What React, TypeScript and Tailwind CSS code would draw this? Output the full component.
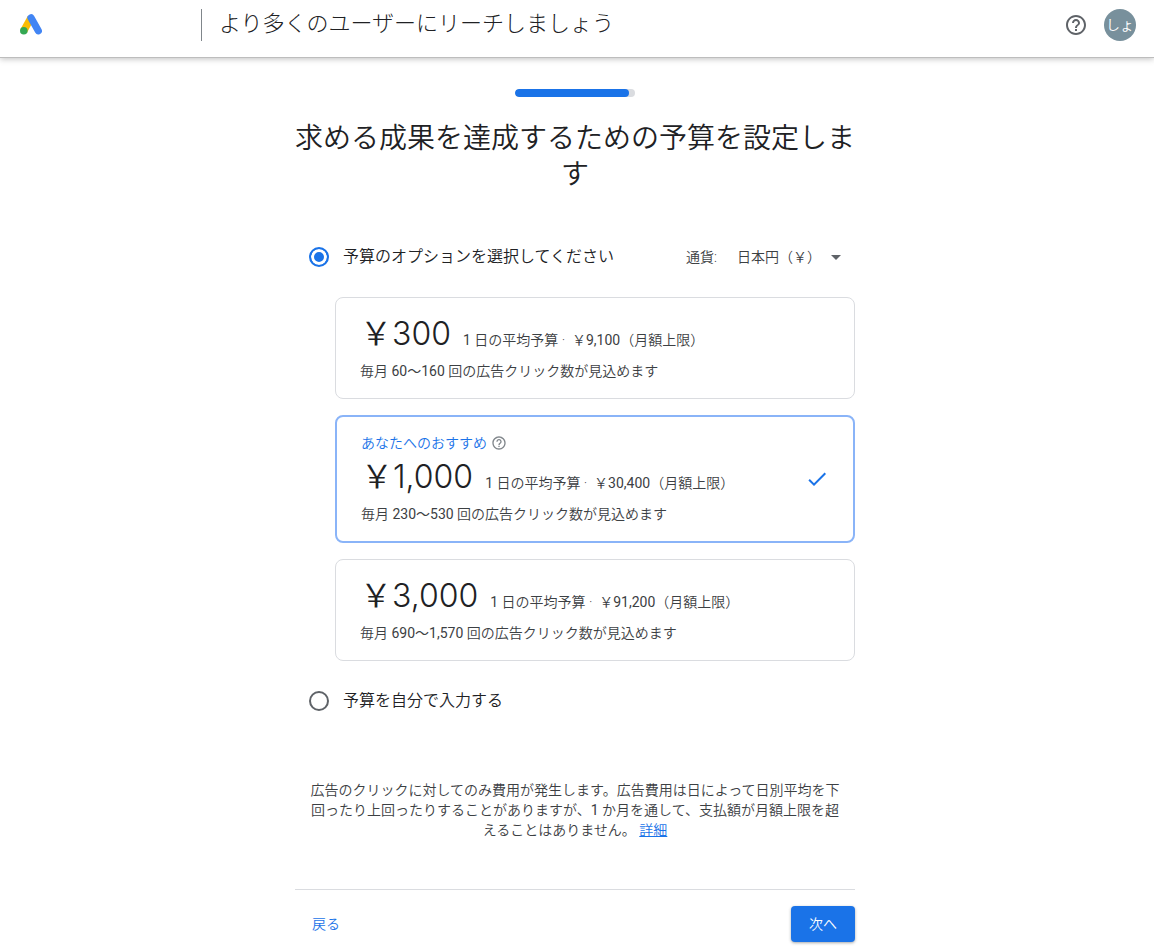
import { useState } from "react";

const YEN = "\uFFE5";

const HELP_PATH =
  "M11 18h2v-2h-2v2zm1-16C6.48 2 2 6.48 2 12s4.48 10 10 10 10-4.48 10-10S17.52 2 12 2zm0 18c-4.41 0-8-3.59-8-8s3.59-8 8-8 8 3.59 8 8-3.59 8-8 8zm0-14c-2.21 0-4 1.79-4 4h2c0-1.1.9-2 2-2s2 .9 2 2c0 2-3 1.75-3 5h2c0-2.25 3-2.5 3-5 0-2.21-1.79-4-4-4z";

function HelpIcon({ className }: { className: string }) {
  return (
    <svg viewBox="0 0 24 24" className={className} fill="currentColor" aria-hidden="true">
      <path d={HELP_PATH} />
    </svg>
  );
}

function AdsLogo() {
  return (
    <svg viewBox="0 0 22 21" className="h-[21px] w-[22px]" aria-hidden="true">
      <path d="M11 3.8 3.8 16.8" stroke="#fbbc04" strokeWidth="7.4" />
      <path d="M11 3.8 18.3 16.8" stroke="#4285f4" strokeWidth="7.2" strokeLinecap="round" />
      <circle cx="3.8" cy="16.8" r="3.8" fill="#34a853" />
    </svg>
  );
}

type Budget = {
  id: string;
  daily: string;
  monthly: string;
  clicks: string;
  recommended?: boolean;
};

const BUDGETS: Budget[] = [
  { id: "low", daily: "300", monthly: "9,100", clicks: "60〜160" },
  { id: "mid", daily: "1,000", monthly: "30,400", clicks: "230〜530", recommended: true },
  { id: "high", daily: "3,000", monthly: "91,200", clicks: "690〜1,570" },
];

function BudgetCard({
  budget,
  selected,
  onSelect,
}: {
  budget: Budget;
  selected: boolean;
  onSelect: () => void;
}) {
  return (
    <label
      className={
        selected
          ? "flex cursor-pointer items-center justify-between rounded-lg border-2 border-[#8ab4f8] px-6 pt-4 pb-[17px]"
          : "flex cursor-pointer items-center justify-between rounded-lg border border-[#dadce0] px-6 pt-4 pb-[17px]"
      }
    >
      <input
        type="radio"
        name="budget"
        value={budget.id}
        checked={selected}
        onChange={onSelect}
        className="sr-only"
      />
      <span className="block">
        {budget.recommended && (
          <span className="mb-1 flex h-5 items-center gap-1 text-sm text-[#1a73e8]">
            あなたへのおすすめ
            <HelpIcon className="h-4 w-4 text-[#80868b]" />
          </span>
        )}
        <span className="flex items-baseline gap-3 whitespace-nowrap">
          <span className="font-[Inter,'Noto_Sans_CJK_JP',sans-serif] text-[32px] leading-10 text-[#202124]">
            {YEN}
            {budget.daily}
          </span>
          <span className="text-sm leading-5">
            <span className="font-normal">1</span> 日の平均予算 ·&nbsp; {YEN}
            <span className="font-normal">{budget.monthly}</span>（月額上限）
          </span>
        </span>
        <span className="mt-[7px] block text-sm leading-5">
          毎月 <span className="font-normal">{budget.clicks}</span> 回の広告クリック数が見込めます
        </span>
      </span>
      {selected && (
        <svg viewBox="0 0 24 24" className="h-6 w-6 shrink-0" fill="#1a73e8" aria-hidden="true">
          <path d="M9 16.17 4.83 12l-1.42 1.41L9 19 21 7l-1.41-1.41z" />
        </svg>
      )}
    </label>
  );
}

function ModeRadio({
  id,
  label,
  checked,
  onChange,
}: {
  id: string;
  label: string;
  checked: boolean;
  onChange: () => void;
}) {
  return (
    <div className="flex items-center gap-[14px]">
      <input
        id={id}
        type="radio"
        name="mode"
        checked={checked}
        onChange={onChange}
        className="h-5 w-5 appearance-none rounded-full border-2 border-[#5f6368] checked:border-[#1a73e8] checked:bg-[#1a73e8] checked:shadow-[inset_0_0_0_3px_#fff]"
      />
      <label htmlFor={id} className="text-base text-[#202124]">
        {label}
      </label>
    </div>
  );
}

export default function App() {
  const [mode, setMode] = useState("preset");
  const [budget, setBudget] = useState("mid");

  return (
    <div className="min-h-screen bg-white font-[Roboto,'Noto_Sans_CJK_JP',sans-serif] font-[350] text-[#3c4043]">
      <header className="flex h-[58px] items-center border-b border-[#bdbdbd] pr-[18px] pb-[7px] pl-5 shadow-[0_1px_6px_rgba(0,0,0,0.25)]">
        <div className="flex w-[181px] shrink-0 pb-0.5">
          <AdsLogo />
        </div>
        <div className="h-8 w-px bg-[#80868b]" />
        <p className="ml-[17px] flex-1 pb-0.5 text-[22px] leading-8 font-light text-[#202124]">
          より多くのユーザーにリーチしましょう
        </p>
        <button type="button" aria-label="ヘルプ" className="mr-4 text-[#5f6368]">
          <HelpIcon className="h-6 w-6" />
        </button>
        <button
          type="button"
          className="flex h-8 w-8 items-center justify-center rounded-full bg-[#78909c] text-sm text-white"
        >
          しょ
        </button>
      </header>

      <main className="pr-1">
        <div className="mx-auto max-w-[560px] pt-[31px]">
          <div className="mx-auto h-2 w-[120px] overflow-hidden rounded-full bg-[#dadce0]">
            <div className="h-full w-[95%] rounded-full bg-[#1a73e8]" />
          </div>
          <h1 className="mt-6 text-center text-[28px] leading-9 text-[#202124]">
            求める成果を達成するための予算を設定します
          </h1>

          <div className="mt-[46px] flex h-9 items-center justify-between pr-[14px] pl-[14px]">
            <ModeRadio
              id="mode-preset"
              label="予算のオプションを選択してください"
              checked={mode === "preset"}
              onChange={() => setMode("preset")}
            />
            <div className="flex items-center text-sm">
              <label htmlFor="currency">通貨:</label>
              <div className="ml-5 grid items-center">
                <select
                  id="currency"
                  className="col-start-1 row-start-1 appearance-none bg-transparent pr-5"
                >
                  <option>{`日本円（${YEN}）`}</option>
                </select>
                <svg
                  viewBox="0 0 10 5"
                  className="pointer-events-none col-start-1 row-start-1 h-[5px] w-[10px] justify-self-end"
                  fill="#5f6368"
                  aria-hidden="true"
                >
                  <path d="M0 0h10L5 5z" />
                </svg>
              </div>
            </div>
          </div>

          <div className="mt-[22px] flex flex-col gap-4 pl-10">
            {BUDGETS.map((b) => (
              <BudgetCard
                key={b.id}
                budget={b}
                selected={b.id === budget}
                onSelect={() => setBudget(b.id)}
              />
            ))}
          </div>

          <div className="mt-7 pl-[14px]">
            <ModeRadio
              id="mode-custom"
              label="予算を自分で入力する"
              checked={mode === "custom"}
              onChange={() => setMode("custom")}
            />
          </div>

          <p className="mt-[67px] px-3 text-center text-sm leading-5">
            広告のクリックに対してのみ費用が発生します。広告費用は日によって日別平均を下回ったり上回ったりすることがありますが、
            <span className="font-normal">1</span>{" "}
            か月を通して、支払額が月額上限を超えることはありません。{" "}
            <a href="#details" className="inline-block text-[#1a73e8] underline">
              詳細
            </a>
          </p>

          <footer className="mt-[49px] flex items-center justify-between border-t border-[#dadce0] pt-4 pb-2">
            <button type="button" className="h-9 px-[17px] text-sm text-[#1a73e8]">
              戻る
            </button>
            <button
              type="button"
              className="h-9 w-16 rounded bg-[#1a73e8] text-sm text-white shadow-[0_1px_3px_rgba(60,64,67,0.45)]"
            >
              次へ
            </button>
          </footer>
        </div>
      </main>
    </div>
  );
}
